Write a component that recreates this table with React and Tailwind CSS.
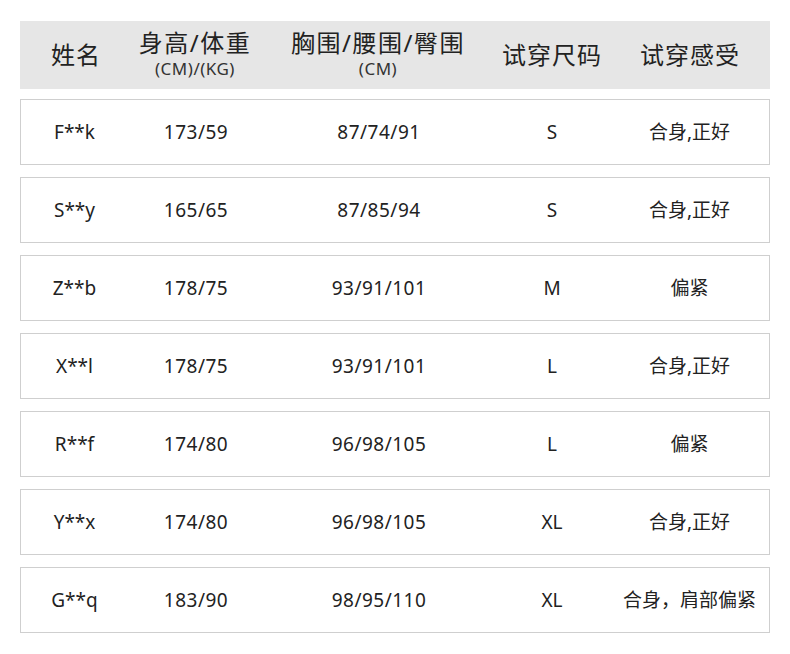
const ROWS = [
  { name: 'F**k', hw: '173/59', body: '87/74/91', size: 'S', feel: '合身,正好' },
  { name: 'S**y', hw: '165/65', body: '87/85/94', size: 'S', feel: '合身,正好' },
  { name: 'Z**b', hw: '178/75', body: '93/91/101', size: 'M', feel: '偏紧' },
  { name: 'X**l', hw: '178/75', body: '93/91/101', size: 'L', feel: '合身,正好' },
  { name: 'R**f', hw: '174/80', body: '96/98/105', size: 'L', feel: '偏紧' },
  { name: 'Y**x', hw: '174/80', body: '96/98/105', size: 'XL', feel: '合身,正好' },
  { name: 'G**q', hw: '183/90', body: '98/95/110', size: 'XL', feel: '合身，肩部偏紧' },
];

const COLS = 'grid grid-cols-[112px_126px_240px_106px_166px] items-center text-center';

export default function App() {
  return (
    <div
      className="w-[790px] h-[654px] bg-white px-[20px] pt-[21px]"
      style={{ fontFamily: '"Noto Sans", "Noto Sans CJK SC", sans-serif' }}
    >
      {/* Header */}
      <div className={`${COLS} h-[68px] bg-[#e6e6e6] text-[#222]`}>
        <div className="text-[24px] leading-none tracking-[1px]">姓名</div>
        <div className="flex flex-col items-center -mt-[3px]">
          <span className="text-[24px] leading-[30px] tracking-[1.5px]">身高/体重</span>
          <span className="text-[17px] leading-[22px] text-[#333] tracking-[0.5px]">(CM)/(KG)</span>
        </div>
        <div className="flex flex-col items-center -mt-[3px]">
          <span className="text-[24px] leading-[30px] tracking-[1.5px]">胸围/腰围/臀围</span>
          <span className="text-[17px] leading-[22px] text-[#333] tracking-[0.5px]">(CM)</span>
        </div>
        <div className="text-[24px] leading-none tracking-[1px] pl-[2px]">试穿尺码</div>
        <div className="text-[24px] leading-none tracking-[1px] pl-[6px]">试穿感受</div>
      </div>

      {/* Rows */}
      <div className="mt-[10px] flex flex-col gap-[12px]">
        {ROWS.map((r) => (
          <div
            key={r.name}
            className={`${COLS} h-[66px] border border-[#cfcfcf] text-[19px] text-[#222] leading-none`}
          >
            <div className="-ml-[5px]">{r.name}</div>
            <div className="tracking-[0.5px]">{r.hw}</div>
            <div className="tracking-[0.5px]">{r.body}</div>
            <div>{r.size}</div>
            <div className="whitespace-nowrap pl-[3px]">{r.feel}</div>
          </div>
        ))}
      </div>
    </div>
  );
}
